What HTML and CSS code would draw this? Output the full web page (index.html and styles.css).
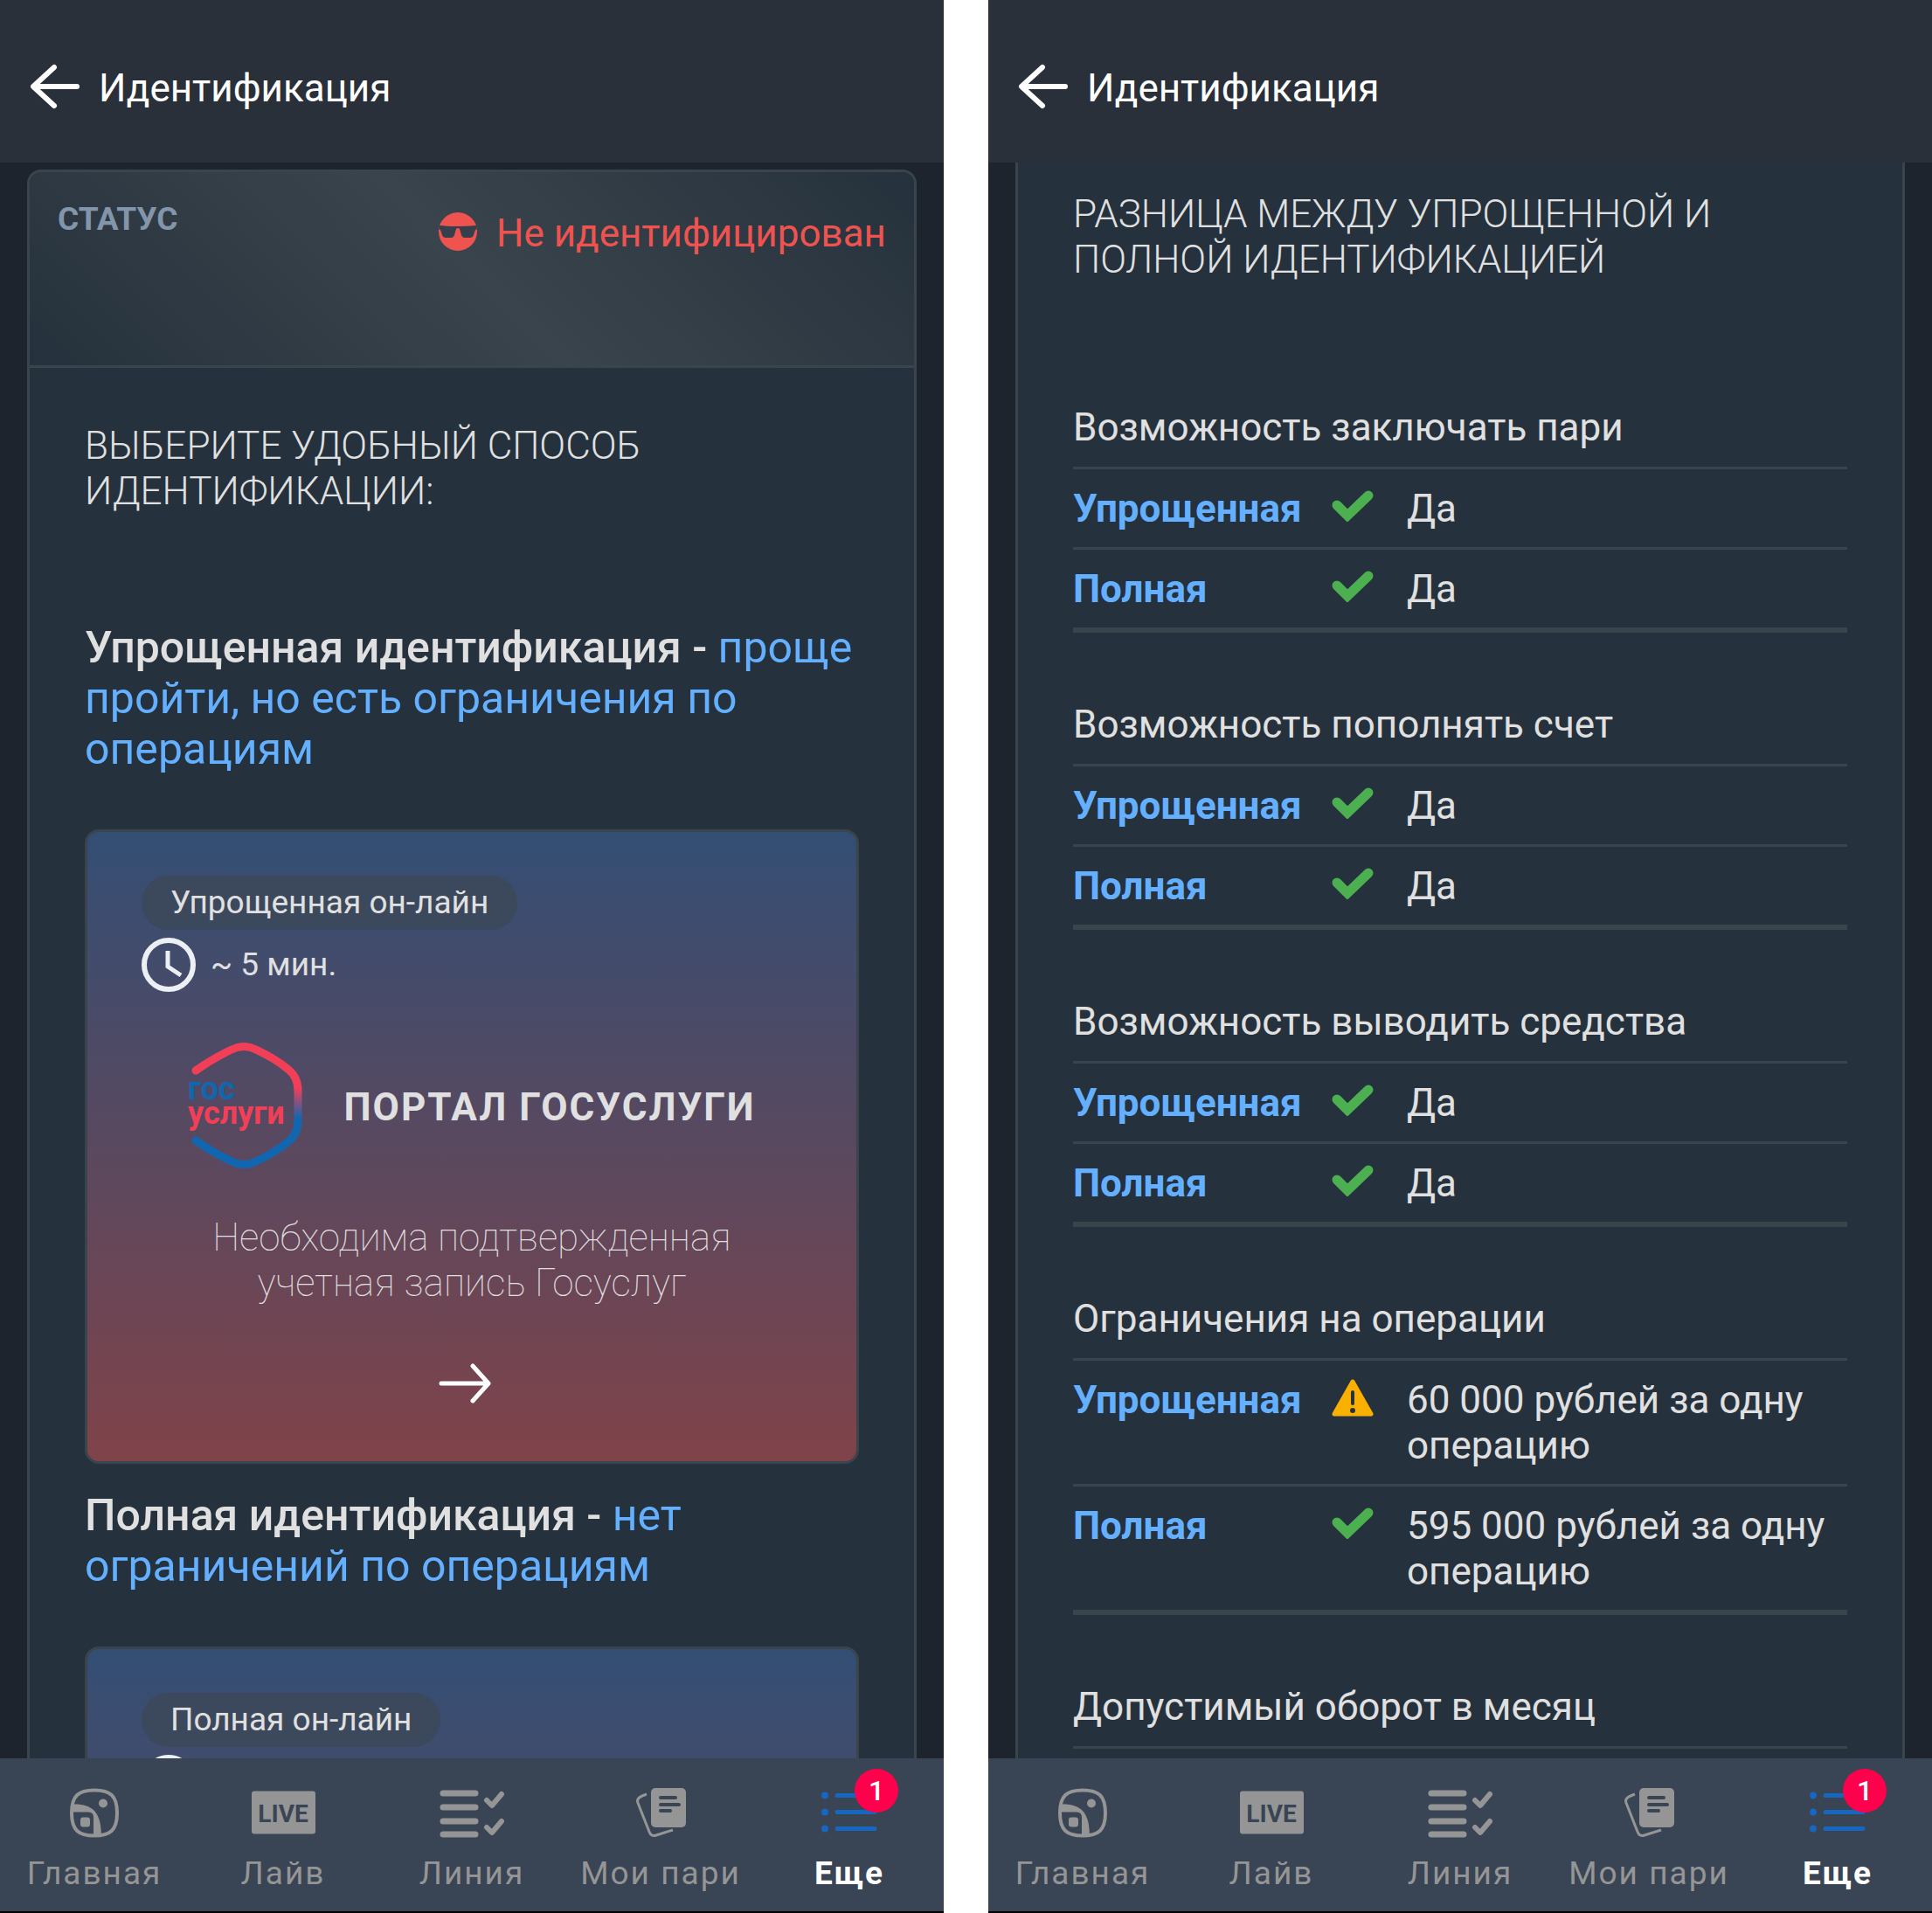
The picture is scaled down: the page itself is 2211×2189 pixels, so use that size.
FILE: index.html
```html
<!DOCTYPE html>
<html lang="ru">
<head>
  <meta charset="UTF-8" />
  <meta name="viewport" content="width=device-width, initial-scale=1.0" />
  <title>Идентификация</title>
  <link rel="stylesheet" href="styles.css">
</head>
<body>
  <!-- Shared icons -->
  <svg class="sprite" aria-hidden="true">
    <symbol id="back" viewBox="0 0 58 52">
      <path d="M54 26H5M28 4L4 26l24 22" fill="none" stroke="#fff" stroke-width="6" stroke-linecap="round" stroke-linejoin="round" />
    </symbol>
    <symbol id="clock" viewBox="0 0 62 62">
      <circle cx="31" cy="31" r="28" fill="none" stroke="#eceff4" stroke-width="6" />
      <path d="M30 15v18l15 10" fill="none" stroke="#eceff4" stroke-width="5" />
    </symbol>
    <symbol id="check" viewBox="0 0 48 36">
      <path d="M6 17l12 12L42 6" fill="none" stroke="#4caf50" stroke-width="11" stroke-linejoin="miter" stroke-linecap="round" />
    </symbol>
    <symbol id="warning" viewBox="0 0 48 43">
      <path d="M24 3L45 40H3z" fill="#f9b000" stroke="#f9b000" stroke-width="5" stroke-linejoin="round" />
      <path d="M24 15v13" stroke="#25313c" stroke-width="4" stroke-linecap="round" />
      <circle cx="24" cy="36" r="3" fill="#25313c" />
    </symbol>
    <symbol id="home" viewBox="0 0 56 56">
      <path d="M28 2C46 2 54 8 54 28S46 54 28 54 2 48 2 28 10 2 28 2z" fill="none" stroke="currentColor" stroke-width="4" />
      <path d="M2 18C25 17 36 26 36 54H27V33Q27 27 21 27H2z" fill="currentColor" />
      <circle cx="38" cy="17" r="5" fill="currentColor" />
      <rect x="12" y="33" width="11" height="11" rx="3" fill="currentColor" />
    </symbol>
    <symbol id="live" viewBox="0 0 73 56">
      <rect x="0" y="3" width="73" height="49" rx="3" fill="currentColor" />
      <text class="live-text" x="36" y="38" text-anchor="middle">LIVE</text>
    </symbol>
    <symbol id="lines" viewBox="0 0 74 57">
      <path d="M4 6h37M4 22h37M4 38h37M4 53h37" stroke="currentColor" stroke-width="7" stroke-linecap="round" />
      <path d="M54 14l6 6L71 7M54 45l6 6 11-13" fill="none" stroke="currentColor" stroke-width="6" stroke-linecap="round" stroke-linejoin="round" />
    </symbol>
    <symbol id="bets" viewBox="0 0 57 57">
      <path d="M12 7L7 9Q0 12 2 17L15 50Q17 56 23 54L42 48" fill="none" stroke="currentColor" stroke-width="3" />
      <rect x="17" y="0" width="40" height="45" rx="5" fill="currentColor" />
      <path d="M28 11h17M28 19h21M28 26h11" stroke="#394454" stroke-width="4" stroke-linecap="round" />
    </symbol>
    <symbol id="more" viewBox="0 0 64 56">
      <g fill="#1766c0">
        <circle cx="4" cy="8" r="4" /><circle cx="4" cy="27" r="4" /><circle cx="4" cy="46" r="4" />
      </g>
      <path d="M18 8h43M18 27h43M18 46h43" stroke="#1766c0" stroke-width="5" stroke-linecap="round" />
    </symbol>
  </svg>

  <div class="screens">
    <div class="screen">
      <header class="topbar">
        <button class="back" aria-label="Назад"><svg><use href="#back" /></svg></button>
        <h1>Идентификация</h1>
      </header>

      <main class="content">
        <div class="panel panel-first">
          <div class="status">
            <span class="status-label">СТАТУС</span>
            <span class="status-value">
              <svg viewBox="0 0 44 46">
                <circle cx="22" cy="24" r="22" fill="#ef5350" />
                <path d="M1 17Q22 19 43 17L44 21 42 22 40 28Q39 31 36 31H30Q27 31 26 28L24 21Q22 19 20 21L18 28Q17 31 14 31H8Q5 31 4 28L2 22 0 21Z" fill="#35404a" />
              </svg>
              Не идентифицирован
            </span>
          </div>

          <div class="panel-body">
            <h2>ВЫБЕРИТЕ УДОБНЫЙ СПОСОБ ИДЕНТИФИКАЦИИ:</h2>

            <h3><b>Упрощенная идентификация -</b> проще пройти, но есть ограничения по операциям</h3>
            <a class="method" href="#">
              <span class="chip">Упрощенная он-лайн</span>
              <span class="time"><svg><use href="#clock" /></svg>~ 5 мин.</span>
              <span class="brand">
                <svg viewBox="0 0 132 148">
                  <defs>
                    <linearGradient id="gosGradient" x1="0" y1="0" x2="0" y2="1">
                      <stop offset="0.35" stop-color="#f23f58" />
                      <stop offset="0.61" stop-color="#1266b0" />
                    </linearGradient>
                  </defs>
                  <path d="M9 32Q27 19 50 8Q64 1 78 8Q101 19 114 30Q126 39 126 55V89Q126 105 114 114Q101 125 78 136Q64 143 50 136Q27 125 9 112" fill="none" stroke="url(#gosGradient)" stroke-width="9" stroke-linecap="round" />
                  <text class="gos-blue" x="0" y="65">гос</text>
                  <text class="gos-red" x="0" y="93">услуги</text>
                </svg>
                ПОРТАЛ ГОСУСЛУГИ
              </span>
              <span class="note">Необходима подтвержденная учетная запись Госуслуг</span>
              <svg class="go" viewBox="0 0 60 46">
                <path d="M3 23h54M39 3l18 20-18 20" fill="none" stroke="#fff" stroke-width="5" stroke-linecap="round" stroke-linejoin="round" />
              </svg>
            </a>

            <h3><b>Полная идентификация -</b> нет ограничений по операциям</h3>
            <a class="method" href="#">
              <span class="chip">Полная он-лайн</span>
              <span class="time"><svg><use href="#clock" /></svg>~ 5 мин.</span>
            </a>
          </div>
        </div>
      </main>

      <nav class="tabbar">
        <a href="#"><svg class="i-home"><use href="#home" /></svg>Главная</a>
        <a href="#"><svg class="i-live"><use href="#live" /></svg>Лайв</a>
        <a href="#"><svg class="i-lines"><use href="#lines" /></svg>Линия</a>
        <a href="#"><svg class="i-bets"><use href="#bets" /></svg>Мои пари</a>
        <a href="#" class="active"><svg class="i-more"><use href="#more" /></svg><span class="badge">1</span>Еще</a>
      </nav>
    </div>

    <div class="screen">
      <header class="topbar">
        <button class="back" aria-label="Назад"><svg><use href="#back" /></svg></button>
        <h1>Идентификация</h1>
      </header>

      <main class="content">
        <div class="panel">
          <div class="panel-body compare">
            <h2>РАЗНИЦА МЕЖДУ УПРОЩЕННОЙ И ПОЛНОЙ ИДЕНТИФИКАЦИЕЙ</h2>

            <table>
              <caption>Возможность заключать пари</caption>
              <tr><th>Упрощенная</th><td class="mark"><svg class="check"><use href="#check" /></svg></td><td>Да</td></tr>
              <tr><th>Полная</th><td class="mark"><svg class="check"><use href="#check" /></svg></td><td>Да</td></tr>
            </table>

            <table>
              <caption>Возможность пополнять счет</caption>
              <tr><th>Упрощенная</th><td class="mark"><svg class="check"><use href="#check" /></svg></td><td>Да</td></tr>
              <tr><th>Полная</th><td class="mark"><svg class="check"><use href="#check" /></svg></td><td>Да</td></tr>
            </table>

            <table>
              <caption>Возможность выводить средства</caption>
              <tr><th>Упрощенная</th><td class="mark"><svg class="check"><use href="#check" /></svg></td><td>Да</td></tr>
              <tr><th>Полная</th><td class="mark"><svg class="check"><use href="#check" /></svg></td><td>Да</td></tr>
            </table>

            <table>
              <caption>Ограничения на операции</caption>
              <tr><th>Упрощенная</th><td class="mark"><svg class="warning"><use href="#warning" /></svg></td><td>60 000 рублей за одну операцию</td></tr>
              <tr><th>Полная</th><td class="mark"><svg class="check"><use href="#check" /></svg></td><td>595 000 рублей за одну операцию</td></tr>
            </table>

            <table>
              <caption>Допустимый оборот в месяц</caption>
              <tr><th></th><td class="mark"></td><td></td></tr>
            </table>
          </div>
        </div>
      </main>

      <nav class="tabbar">
        <a href="#"><svg class="i-home"><use href="#home" /></svg>Главная</a>
        <a href="#"><svg class="i-live"><use href="#live" /></svg>Лайв</a>
        <a href="#"><svg class="i-lines"><use href="#lines" /></svg>Линия</a>
        <a href="#"><svg class="i-bets"><use href="#bets" /></svg>Мои пари</a>
        <a href="#" class="active"><svg class="i-more"><use href="#more" /></svg><span class="badge">1</span>Еще</a>
      </nav>
    </div>
  </div>
</body>
</html>
```

FILE: styles.css
```css
* {
  box-sizing: border-box;
}
body {
  margin: 0;
  background: #fff;
  color: #e0e0e0;
  font-family: Roboto, sans-serif;
  font-size: 44px;
  line-height: 52px;
}
h1, h2, h3 {
  margin: 0;
}
a {
  color: inherit;
  text-decoration: none;
}
svg {
  display: block;
  flex: none;
}
.sprite {
  display: none;
}

/* two phone screens side by side */
.screens {
  display: grid;
  grid-template-columns: 1fr 1fr;
  gap: 51px;
  height: 100vh;
}
.screen {
  display: flex;
  flex-direction: column;
  min-width: 0;
  min-height: 0;
  background: #1e242d;
  border-bottom: 2px solid #000;
}

.topbar {
  display: flex;
  align-items: center;
  gap: 21px;
  flex: none;
  height: 186px;
  padding: 12px 34px 0;
  background: #293039;
}
.topbar h1 {
  padding-top: 4px;
  color: #fff;
  font-size: 44px;
  font-weight: 400;
}
.back {
  padding: 0;
  border: none;
  background: none;
  cursor: pointer;
}
.back svg {
  width: 58px;
  height: 52px;
}

.content {
  flex: 1;
  min-height: 0;
  padding: 0 31px;
  overflow: hidden;
}
.panel {
  background: #25313c;
  border: 3px solid #3a444c;
  border-top: none;
}
.panel-first {
  margin-top: 8px;
  border-top: 3px solid #3a444c;
  border-radius: 16px;
}
.panel-body {
  padding: 63px;
}
h2 {
  font-size: 44px;
  font-weight: 300;
}
h3 {
  color: #64b0ff;
  font-size: 50px;
  font-weight: 400;
  line-height: 58px;
}
h3 b {
  color: #e0e0e0;
  font-weight: 500;
}
h2 + h3 {
  margin-top: 124px;
}

.status {
  display: flex;
  justify-content: space-between;
  height: 224px;
  padding: 28px 32px;
  border-bottom: 3px solid #3a444c;
  border-radius: 13px 13px 0 0;
  background: linear-gradient(45deg, #25313c, #3a444c, #25313c);
}
.status-label {
  color: #8295aa;
  font-size: 37px;
  font-weight: 700;
}
.status-value {
  display: flex;
  gap: 22px;
  padding-top: 16px;
  color: #ef5350;
}
.status-value svg {
  width: 44px;
  height: 46px;
}

/* identification method card */
.method {
  display: flex;
  flex-direction: column;
  align-items: flex-start;
  height: 726px;
  margin: 63px 0 30px;
  padding: 50px 62px;
  border: 3px solid #3a444c;
  border-radius: 16px;
  background: linear-gradient(#334e74, #80434a);
}
.chip {
  padding: 0 33px;
  border-radius: 32px;
  background: #3c485c;
  font-size: 37px;
  line-height: 62px;
}
.time {
  display: flex;
  align-items: center;
  gap: 17px;
  margin-top: 9px;
  font-size: 37px;
}
.time svg {
  width: 62px;
  height: 62px;
}
.brand {
  display: flex;
  align-items: center;
  align-self: center;
  gap: 46px;
  margin-top: 58px;
  font-weight: 700;
  letter-spacing: 2px;
}
.brand svg {
  width: 132px;
  height: 148px;
  letter-spacing: 0;
}
.gos-blue, .gos-red {
  font-size: 36px;
  font-weight: 700;
}
.gos-blue { fill: #1266b0; }
.gos-red { fill: #f23f58; }
.note {
  align-self: center;
  width: 640px;
  margin-top: 49px;
  font-weight: 100;
  text-align: center;
}
.go {
  width: 60px;
  height: 46px;
  margin: 66px 0 0 340px;
}

/* comparison tables */
.compare {
  padding-top: 33px;
}
.compare h2 {
  margin-bottom: 140px;
}
table {
  width: 100%;
  margin-bottom: 79px;
  border-collapse: separate;
  border-spacing: 0;
  border-bottom: 6px solid #3a444c;
  table-layout: fixed;
}
caption {
  padding-bottom: 19px;
  text-align: left;
}
th, td {
  padding: 19px 0 18px;
  border-top: 3px solid #3a444c;
  text-align: left;
  vertical-align: top;
}
th {
  width: 296px;
  color: #64b0ff;
  font-weight: 700;
}
.mark {
  width: 86px;
}
.check {
  width: 48px;
  height: 36px;
  margin-top: 5px;
}
.warning {
  width: 48px;
  height: 43px;
  margin-top: 2px;
}

.tabbar {
  display: grid;
  grid-template-columns: repeat(5, 1fr);
  flex: none;
  height: 175px;
  padding-top: 34px;
  background: #394454;
  color: #959595;
}
.tabbar a {
  position: relative;
  display: flex;
  flex-direction: column;
  align-items: center;
  gap: 15px;
  font-size: 37px;
  line-height: 52px;
  letter-spacing: 2px;
}
.tabbar svg {
  height: 57px;
}
.i-home { width: 56px; }
.i-live { width: 73px; }
.i-lines { width: 74px; }
.i-bets { width: 57px; }
.i-more { width: 64px; }
.live-text {
  fill: #394454;
  font-size: 28px;
  font-weight: 700;
  letter-spacing: 0;
}
.tabbar .active {
  color: #fff;
  font-weight: 700;
}
.badge {
  position: absolute;
  top: -22px;
  left: 114px;
  width: 50px;
  height: 50px;
  border-radius: 50%;
  background: #ff004c;
  font-size: 32px;
  font-weight: 500;
  line-height: 50px;
  letter-spacing: 0;
  text-align: center;
}
```
